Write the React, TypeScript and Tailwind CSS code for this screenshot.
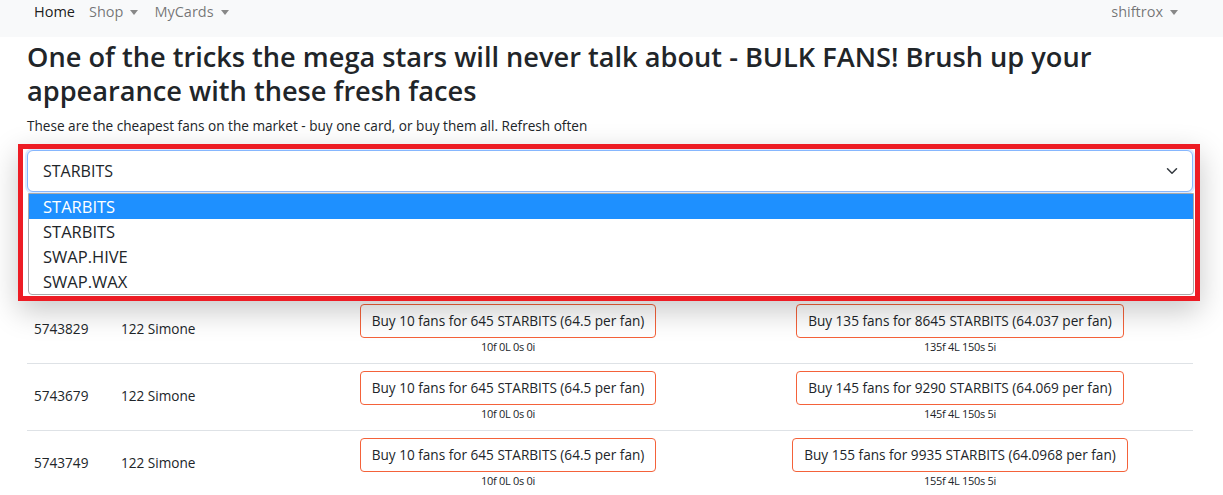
import React from "react";

type Row = {
  id: string;
  name: string;
  small: { label: string; meta: string };
  big: { label: string; meta: string };
};

const rows: Row[] = [
  {
    id: "5743829",
    name: "122 Simone",
    small: { label: "Buy 10 fans for 645 STARBITS (64.5 per fan)", meta: "10f 0L 0s 0i" },
    big: { label: "Buy 135 fans for 8645 STARBITS (64.037 per fan)", meta: "135f 4L 150s 5i" },
  },
  {
    id: "5743679",
    name: "122 Simone",
    small: { label: "Buy 10 fans for 645 STARBITS (64.5 per fan)", meta: "10f 0L 0s 0i" },
    big: { label: "Buy 145 fans for 9290 STARBITS (64.069 per fan)", meta: "145f 4L 150s 5i" },
  },
  {
    id: "5743749",
    name: "122 Simone",
    small: { label: "Buy 10 fans for 645 STARBITS (64.5 per fan)", meta: "10f 0L 0s 0i" },
    big: { label: "Buy 155 fans for 9935 STARBITS (64.0968 per fan)", meta: "155f 4L 150s 5i" },
  },
];

const options = ["STARBITS", "STARBITS", "SWAP.HIVE", "SWAP.WAX"];

function Caret() {
  return (
    <span className="ml-[7px] inline-block h-0 w-0 border-x-[4px] border-t-[5px] border-x-transparent border-t-[#888]" />
  );
}

function BuyCell({ label, meta }: { label: string; meta: string }) {
  return (
    <div className="flex flex-col items-center">
      <button className="h-[34px] rounded-[4px] border border-[#f4623a] bg-white px-[11px] text-[13.6px] text-[#212529]">
        {label}
      </button>
      <div className="mt-[1px] text-[11px] leading-[16px] tracking-[-0.3px] text-[#212529]">{meta}</div>
    </div>
  );
}

export default function App() {
  return (
    <div
      className="min-h-[495px] bg-white text-[#212529]"
      style={{ fontFamily: '"Open Sans", "Noto Sans", sans-serif' }}
    >
      <nav className="flex h-[37px] items-start bg-[#f8f9fa] pl-[34px] pr-[45px] pt-[1px] text-[14.5px] leading-[22px]">
        <a className="text-[rgba(0,0,0,0.9)]">Home</a>
        <a className="ml-[14px] flex items-center text-[rgba(0,0,0,0.55)]">
          Shop
          <Caret />
        </a>
        <a className="ml-[16px] flex items-center text-[rgba(0,0,0,0.55)]">
          MyCards
          <Caret />
        </a>
        <a className="ml-auto flex items-center text-[rgba(0,0,0,0.55)]">
          shiftrox
          <Caret />
        </a>
      </nav>

      <main className="pl-[27px] pr-[30px] pt-[3px]">
        <h3 className="mb-[8px] text-[27.2px] font-semibold leading-[33.6px]">
          One of the tricks the mega stars will never talk about - BULK FANS! Brush up your appearance with these
          fresh faces
        </h3>
        <p className="text-[13.6px] leading-[21px]">
          These are the cheapest fans on the market - buy one card, or buy them all. Refresh often
        </p>

        <div className="relative mt-[14px]">
          <div className="flex h-[42px] items-center justify-between rounded-[6px] border border-[#86b7fe] bg-white pl-[15px] pr-[12px] text-[16px] shadow-[0_0_0_2px_rgba(13,110,253,0.15)]">
            <span>STARBITS</span>
            <svg width="16" height="12" viewBox="0 0 16 16" fill="none">
              <path d="m2 5 6 6 6-6" stroke="#343a40" strokeWidth="2" strokeLinecap="round" strokeLinejoin="round" />
            </svg>
          </div>

          <div className="absolute left-[-9px] right-[-7px] top-[-6px] z-10 h-[157px] border-[5px] border-[#ed1c24] shadow-[0_10px_28px_rgba(0,0,0,0.22)]">
            <div className="absolute left-[5px] right-[1px] top-[44px] rounded-b-[4px] border border-[#a9a9a9] bg-white text-[16.5px]">
              {options.map((o, i) => (
                <div
                  key={i}
                  className={
                    i === 0
                      ? "h-[25px] bg-[#1e90ff] pl-[14px] leading-[25px] text-white"
                      : "h-[25px] pl-[14px] leading-[25px] text-[#212529]"
                  }
                >
                  {o}
                </div>
              ))}
            </div>
          </div>

          <div className="mt-[104px]">
            {rows.map((r, i) => (
              <div
                key={r.id}
                className={
                  i === 0
                    ? "grid h-[67px] grid-cols-[87px_175px_438px_1fr] items-start pt-[8px]"
                    : "grid h-[67px] grid-cols-[87px_175px_438px_1fr] items-start border-t border-[#dee2e6] pt-[7px]"
                }
              >
                <div className="pl-[7px] pt-[15px] text-[13.6px]">{r.id}</div>
                <div className="pl-[7px] pt-[15px] text-[13.6px]">{r.name}</div>
                <BuyCell {...r.small} />
                <BuyCell {...r.big} />
              </div>
            ))}
          </div>
        </div>
      </main>
    </div>
  );
}
